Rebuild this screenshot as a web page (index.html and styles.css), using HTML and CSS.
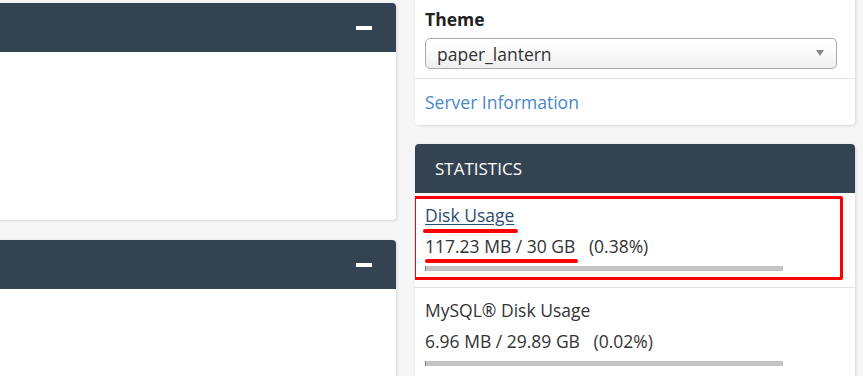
FILE: index.html
```html
<!DOCTYPE html>
<html lang="en">
<head>
    <meta charset="UTF-8" />
    <title>cPanel - Statistics</title>
    <link rel="stylesheet" href="styles.css">
</head>
<body>
    <div class="container">
        <section class="left-col">
            <div class="panel panel-top">
                <div class="panel-heading">
                    <span class="collapse"></span>
                </div>
                <div class="panel-body"></div>
            </div>
            <div class="panel panel-bottom">
                <div class="panel-heading">
                    <span class="collapse"></span>
                </div>
                <div class="panel-body"></div>
            </div>
        </section>
        <aside class="right-col">
            <div class="panel general">
                <div class="theme">
                    <label>Theme</label>
                    <div class="select">
                        <span>paper_lantern</span>
                        <span class="caret"></span>
                    </div>
                </div>
                <div class="info-link">
                    <a href="#">Server Information</a>
                </div>
            </div>
            <div class="panel stats">
                <div class="panel-heading">STATISTICS</div>
                <div class="stat-row highlight">
                    <a href="#" class="stat-title link">Disk Usage</a>
                    <div class="stat-value">
                        <span>117.23 MB / 30 GB</span>
                        <span class="pct">(0.38%)</span>
                    </div>
                    <div class="bar"><div class="fill" style="width: 0.38%"></div></div>
                    <!-- red annotation marks -->
                    <span class="mark mark-box"></span>
                    <span class="mark mark-title"></span>
                    <span class="mark mark-value"></span>
                </div>
                <div class="stat-row">
                    <div class="stat-title">MySQL® Disk Usage</div>
                    <div class="stat-value">
                        <span>6.96 MB / 29.89 GB</span>
                        <span class="pct">(0.02%)</span>
                    </div>
                    <div class="bar"><div class="fill" style="width: 0.02%"></div></div>
                </div>
            </div>
        </aside>
    </div>
</body>
</html>
```

FILE: styles.css
```css
body {
    margin: 0;
    background: #f6f6f6;
    font-family: 'Open Sans', 'Noto Sans', sans-serif;
    font-size: 17.5px;
    color: #333;
    overflow: hidden;
}
.container {
    display: flex;
    gap: 19px;
    height: 376px;
}
.left-col {
    width: 406px;
    margin-left: -10px;
    padding-top: 3px;
    display: flex;
    flex-direction: column;
    gap: 20px;
}
.panel {
    background: #fff;
    border-radius: 4px;
    box-shadow: 1px 1px 3px rgba(0,0,0,0.12);
    overflow: hidden;
}
.panel-heading {
    background: #344351;
    color: #fff;
    height: 49px;
    display: flex;
    align-items: center;
    justify-content: flex-end;
    padding: 0 24px 0 20px;
}
.collapse {
    width: 16px;
    height: 4px;
    background: #fff;
}
.panel-top .panel-body {
    height: 168px;
}
.panel-bottom {
    flex: 1;
    border-radius: 4px 4px 0 0;
}
.right-col {
    width: 440px;
    display: flex;
    flex-direction: column;
    gap: 19px;
}
.general {
    margin-top: -10px;
}
.theme {
    padding: 18px 18px 9px 10px;
    border-bottom: 1px solid #e4e4e4;
}
.theme label {
    display: block;
    font-weight: 700;
    line-height: 22px;
    color: #222;
    margin-bottom: 8px;
}
.select {
    box-sizing: border-box;
    height: 31px;
    border: 1px solid #aaa;
    border-radius: 5px;
    background: linear-gradient(#fff 20%, #eee 100%);
    display: flex;
    align-items: center;
    justify-content: space-between;
    padding: 0 12px 0 11px;
    color: #333;
}
.caret {
    width: 0;
    height: 0;
    border-left: 4px solid transparent;
    border-right: 4px solid transparent;
    border-top: 6px solid #888;
    margin-bottom: 2px;
}
.info-link {
    padding: 12px 10px;
    line-height: 22px;
}
.info-link a {
    color: #4a88c6;
    text-decoration: none;
}
.stats .panel-heading {
    justify-content: flex-start;
    font-size: 17px;
    padding-left: 20px;
}
.stats {
    flex: 1;
    border-radius: 4px 4px 0 0;
}
.stat-row {
    position: relative;
    padding: 11px 10px 16px;
    border-bottom: 1px solid #e4e4e4;
}
.stat-title {
    display: block;
    line-height: 22px;
    color: #333;
}
.stat-title.link {
    color: #2b4d70;
    text-decoration: underline;
    text-underline-offset: 2px;
}
.stat-value {
    margin-top: 9px;
    line-height: 22px;
}
.stat-value .pct {
    margin-left: 9px;
}
.bar {
    margin-top: 9px;
    width: 358px;
    height: 5px;
    background: #c4c4c4;
}
.bar .fill {
    height: 100%;
    min-width: 1px;
    background: #4b9e4b;
}
.mark {
    position: absolute;
    background: #f00;
    border-radius: 2px;
}
.mark-box {
    left: -2px;
    top: 3px;
    width: 424px;
    height: 78px;
    background: none;
    border: 3px solid #f00;
    border-radius: 2px;
}
.mark-title {
    left: 8px;
    top: 36px;
    width: 95px;
    height: 4px;
}
.mark-value {
    left: 10px;
    top: 66px;
    width: 153px;
    height: 4px;
}
```
